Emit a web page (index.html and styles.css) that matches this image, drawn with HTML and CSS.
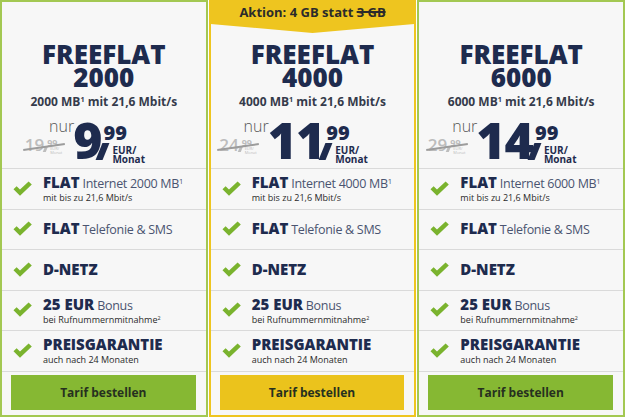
FILE: index.html
```html
<!DOCTYPE html>
<html lang="de">
  <head>
    <meta charset="UTF-8" />
    <meta name="viewport" content="width=device-width, initial-scale=1.0" />
    <title>Freeflat Tarife</title>
    <link rel="stylesheet" href="styles.css">
  </head>
  <body>
    <svg class="defs" width="0" height="0">
      <symbol id="chk" viewBox="0 0 21 16">
        <path d="M1.5 8.2 L4.6 5.3 L8 8.6 L16.6 0.6 L19.8 3.6 L8 14.8 Z" fill="#7ab32e" />
      </symbol>
    </svg>
    <div class="plans">
      <section class="plan">
        <div class="promo-space"></div>
        <h2 class="name">FREEFLAT<br>2000</h2>
        <p class="volume">2000 MB<sup>1</sup> mit 21,6 Mbit/s</p>
        <div class="price">
          <div class="was">
            <span class="nur">nur</span>
            <span class="old"><span class="old-main">19</span><span class="old-side"><span class="old-cents">99</span><span class="old-row"><i class="old-comma"></i><span class="old-unit">EUR/ Monat</span></span></span></span>
          </div>
          <span class="euro">9</span>
          <span class="side">
            <span class="cents">99</span>
            <span class="unit-row"><i class="comma"></i><span class="unit"><span>EUR/</span><span>Monat</span></span></span>
          </span>
        </div>
        <ul class="features">
          <li><svg class="check"><use href="#chk" /></svg><div class="feat"><b>FLAT</b> Internet 2000 MB<sup>1</sup><small>mit bis zu 21,6 Mbit/s</small></div></li>
          <li><svg class="check"><use href="#chk" /></svg><div class="feat"><b>FLAT</b> Telefonie &amp; SMS</div></li>
          <li><svg class="check"><use href="#chk" /></svg><div class="feat"><b>D-NETZ</b></div></li>
          <li><svg class="check"><use href="#chk" /></svg><div class="feat"><b>25 EUR</b> Bonus<small>bei Rufnummernmitnahme<sup>2</sup></small></div></li>
          <li><svg class="check"><use href="#chk" /></svg><div class="feat"><b>PREISGARANTIE</b><small>auch nach 24 Monaten</small></div></li>
        </ul>
        <a class="order" href="#">Tarif bestellen</a>
      </section>

      <section class="plan top">
        <div class="promo">Aktion: 4 GB statt <s>3 GB</s></div>
        <h2 class="name">FREEFLAT<br>4000</h2>
        <p class="volume">4000 MB<sup>1</sup> mit 21,6 Mbit/s</p>
        <div class="price">
          <div class="was">
            <span class="nur">nur</span>
            <span class="old"><span class="old-main">24</span><span class="old-side"><span class="old-cents">99</span><span class="old-row"><i class="old-comma"></i><span class="old-unit">EUR/ Monat</span></span></span></span>
          </div>
          <span class="euro">11</span>
          <span class="side">
            <span class="cents">99</span>
            <span class="unit-row"><i class="comma"></i><span class="unit"><span>EUR/</span><span>Monat</span></span></span>
          </span>
        </div>
        <ul class="features">
          <li><svg class="check"><use href="#chk" /></svg><div class="feat"><b>FLAT</b> Internet 4000 MB<sup>1</sup><small>mit bis zu 21,6 Mbit/s</small></div></li>
          <li><svg class="check"><use href="#chk" /></svg><div class="feat"><b>FLAT</b> Telefonie &amp; SMS</div></li>
          <li><svg class="check"><use href="#chk" /></svg><div class="feat"><b>D-NETZ</b></div></li>
          <li><svg class="check"><use href="#chk" /></svg><div class="feat"><b>25 EUR</b> Bonus<small>bei Rufnummernmitnahme<sup>2</sup></small></div></li>
          <li><svg class="check"><use href="#chk" /></svg><div class="feat"><b>PREISGARANTIE</b><small>auch nach 24 Monaten</small></div></li>
        </ul>
        <a class="order" href="#">Tarif bestellen</a>
      </section>

      <section class="plan">
        <div class="promo-space"></div>
        <h2 class="name">FREEFLAT<br>6000</h2>
        <p class="volume">6000 MB<sup>1</sup> mit 21,6 Mbit/s</p>
        <div class="price">
          <div class="was">
            <span class="nur">nur</span>
            <span class="old"><span class="old-main">29</span><span class="old-side"><span class="old-cents">99</span><span class="old-row"><i class="old-comma"></i><span class="old-unit">EUR/ Monat</span></span></span></span>
          </div>
          <span class="euro">14</span>
          <span class="side">
            <span class="cents">99</span>
            <span class="unit-row"><i class="comma"></i><span class="unit"><span>EUR/</span><span>Monat</span></span></span>
          </span>
        </div>
        <ul class="features">
          <li><svg class="check"><use href="#chk" /></svg><div class="feat"><b>FLAT</b> Internet 6000 MB<sup>1</sup><small>mit bis zu 21,6 Mbit/s</small></div></li>
          <li><svg class="check"><use href="#chk" /></svg><div class="feat"><b>FLAT</b> Telefonie &amp; SMS</div></li>
          <li><svg class="check"><use href="#chk" /></svg><div class="feat"><b>D-NETZ</b></div></li>
          <li><svg class="check"><use href="#chk" /></svg><div class="feat"><b>25 EUR</b> Bonus<small>bei Rufnummernmitnahme<sup>2</sup></small></div></li>
          <li><svg class="check"><use href="#chk" /></svg><div class="feat"><b>PREISGARANTIE</b><small>auch nach 24 Monaten</small></div></li>
        </ul>
        <a class="order" href="#">Tarif bestellen</a>
      </section>
    </div>
  </body>
</html>
```

FILE: styles.css
```css
body {
  margin: 0;
  background: #fff;
  font-family: "Open Sans", "Liberation Sans", sans-serif;
  color: #1e2b4e;
}
.defs {
  position: absolute;
}
.plans {
  display: flex;
  gap: 1px;
  width: 625px;
  height: 417px;
  overflow: hidden;
}
.plan {
  flex: 1;
  min-width: 0;
  height: 417px;
  box-sizing: border-box;
  display: flex;
  flex-direction: column;
  background: #f7f7f7;
  border: 2px solid #a3c852;
}
.plan.top {
  border-color: #eec51f;
}
.promo-space {
  height: 31px;
  flex: none;
}
.promo {
  height: 31px;
  margin: -2px 0 0;
  padding-top: 2px;
  flex: none;
  background: #eec51f;
  clip-path: polygon(0 0, 100% 0, 100% 24px, 50% 33px, 0 24px);
  font-size: 13px;
  font-weight: 700;
  line-height: 20px;
  text-align: center;
  color: #2b2b2b;
}
.promo s {
  text-decoration-thickness: 1.5px;
}
.name {
  margin: 10px 0 0;
  font-size: 26px;
  font-weight: 800;
  line-height: 23px;
  text-align: center;
  color: #1e2b4e;
}
.volume {
  margin: 5px 0 0;
  font-size: 12px;
  font-weight: 700;
  line-height: 16px;
  text-align: center;
  color: #353b4b;
}
.volume sup,
.feat sup {
  font-size: 0.6em;
  line-height: 0;
  vertical-align: 0.55em;
}
.price {
  display: flex;
  justify-content: center;
  align-items: flex-start;
  height: 58px;
  padding-right: 38px;
  flex: none;
}
.was {
  display: flex;
  flex-direction: column;
  align-items: flex-end;
  margin: 8px -1px 0 0;
}
.nur {
  font-size: 16px;
  font-weight: 300;
  line-height: 16px;
  color: #555;
}
.old {
  position: relative;
  display: flex;
  margin: 3px 12px 0 0;
  color: #bdbdbd;
}
.old::after {
  content: "";
  position: absolute;
  left: -2px;
  right: -3px;
  top: 9px;
  height: 1.5px;
  background: #9c9c9c;
  transform: rotate(-8deg);
}
.old-main {
  font-size: 17px;
  font-weight: 600;
  line-height: 16px;
}
.old-side {
  display: flex;
  flex-direction: column;
  margin-left: 3px;
}
.old-cents {
  font-size: 9px;
  font-weight: 700;
  line-height: 9px;
  margin-top: 1px;
}
.old-row {
  display: flex;
}
.old-comma {
  width: 3px;
  height: 6px;
  margin: -1px 0 0 -3px;
  background: #bdbdbd;
  transform: skewX(-22deg);
  flex: none;
}
.old-unit {
  width: 12px;
  margin-left: 3px;
  font-size: 4px;
  line-height: 4px;
}
.euro {
  margin-top: 9.6px;
  font-size: 50px;
  font-weight: 800;
  line-height: 40px;
  letter-spacing: -1px;
  color: #1e2b4e;
}
.side {
  display: flex;
  flex-direction: column;
  margin: 12.5px 0 0 2px;
}
.cents {
  font-size: 20px;
  font-weight: 800;
  line-height: 20px;
}
.unit-row {
  display: flex;
  align-items: flex-start;
  margin-top: 3px;
}
.comma {
  width: 7px;
  height: 17px;
  margin: -3px 0 0 -4px;
  background: #1e2b4e;
  transform: skewX(-22deg);
  flex: none;
}
.unit {
  display: flex;
  flex-direction: column;
  margin-left: 6px;
  font-size: 10px;
  font-weight: 700;
  line-height: 9px;
}
.features {
  list-style: none;
  margin: 0;
  padding: 0;
  border-bottom: 1px solid #dadada;
  flex: none;
}
.features li {
  display: flex;
  align-items: center;
  height: 40.5px;
  box-sizing: border-box;
  padding-left: 10px;
  border-top: 1px solid #dadada;
}
.check {
  width: 21px;
  height: 16px;
  margin-right: 10px;
  flex: none;
}
.feat {
  font-size: 12.5px;
  line-height: 16px;
  letter-spacing: -0.3px;
  color: #4a5470;
  white-space: nowrap;
}
.feat b {
  font-size: 15px;
  font-weight: 800;
  letter-spacing: 0;
  color: #1e2b4e;
}
.feat small {
  display: block;
  font-size: 9px;
  line-height: 11px;
  letter-spacing: 0;
  color: #2a2a2a;
}
.order {
  display: flex;
  align-items: center;
  justify-content: center;
  height: 35px;
  margin: 3px 10px 0 9px;
  background: #86b833;
  color: #26301f;
  font-size: 12px;
  font-weight: 700;
  text-decoration: none;
  flex: none;
}
.plan.top .order {
  background: #ebc31c;
}
```
